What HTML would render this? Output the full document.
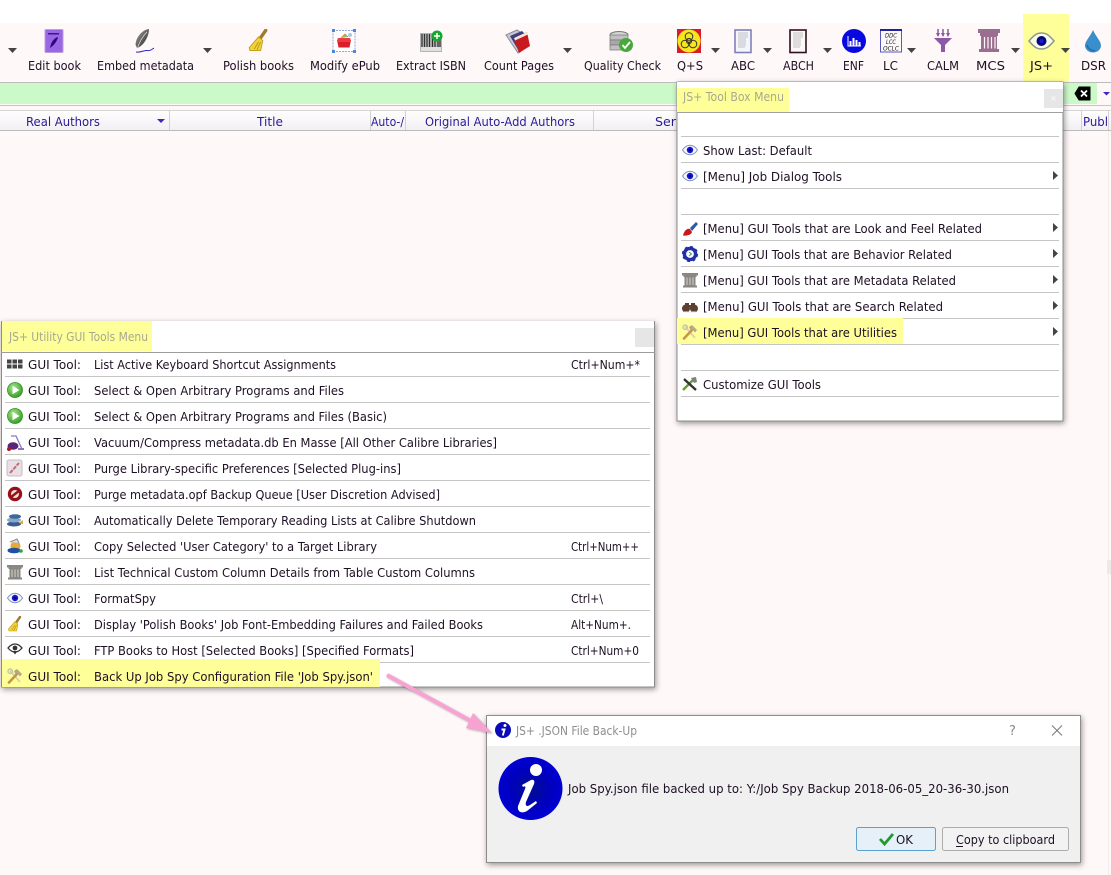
<!DOCTYPE html>
<html><head><meta charset="utf-8"><title>JS+ menus</title>
<style>
html,body{margin:0;padding:0;background:#fff;width:1111px;height:875px;overflow:hidden}
svg{display:block}
text{font-family:"DejaVu Sans","Liberation Sans",sans-serif;font-size:12px;fill:#1e1024}
.h text,text.h{fill:#2a1a96}
.g{fill:#a8a890}
.sh{filter:drop-shadow(1px 2px 3px rgba(0,0,0,.4))}
</style></head><body>
<svg width="1111" height="875" viewBox="0 0 1111 875" xmlns="http://www.w3.org/2000/svg">
<defs>
<linearGradient id="hd" x1="0" y1="0" x2="0" y2="1"><stop offset="0" stop-color="#fff"/><stop offset="1" stop-color="#f3eff3"/></linearGradient>
<linearGradient id="fe" x1="0" y1="0" x2="1" y2="1"><stop offset="0" stop-color="#a8a8a8"/><stop offset="1" stop-color="#202020"/></linearGradient>
<radialGradient id="bi" cx=".5" cy=".5" r=".55"><stop offset="0" stop-color="#000f90"/><stop offset=".6" stop-color="#0000c0"/><stop offset="1" stop-color="#0000d8"/></radialGradient>
<radialGradient id="gr" cx=".4" cy=".35" r=".7"><stop offset="0" stop-color="#a8e890"/><stop offset="1" stop-color="#2f9a1e"/></radialGradient>
<symbol id="eye" viewBox="0 0 16 16"><path d="M.5 8C3 4.200 5.500 3.200 8 3.200S13 4.200 15.500 8C13 11.800 10.500 12.800 8 12.800S3 11.800.5 8Z" fill="#f4f6fa" stroke="#7f92b8" stroke-width="1"/><circle cx="8" cy="8" r="3.200" fill="#1414d8"/><circle cx="8" cy="8" r="1.300" fill="#000080"/></symbol>
<symbol id="col" viewBox="0 0 16 16"><path d="M0 1H16V3.500H0ZM1.500 3.500H14.500V5H1.500ZM2.500 5H13.500V13.500H2.500ZM1 13.500H15V15.500H1Z" fill="#8a8682"/><path d="M5 5.500V13M8 5.500V13M11 5.500V13" stroke="#d0ccc8" stroke-width="1.100"/></symbol>
<symbol id="broom" viewBox="0 0 16 16"><path d="M13 1 9.500 6" stroke="#a07a30" stroke-width="2.400" stroke-linecap="round"/><path d="M8 5.500 11 8 9.500 15 2 15 1.500 13Z" fill="#f2d23a" stroke="#c09a18" stroke-width=".6"/><path d="M5 14 8 9M7 14.500 9.500 9" stroke="#c09a18" stroke-width=".7"/></symbol>
<symbol id="hammer" viewBox="0 0 16 16"><path d="M3 2.500 13 14" stroke="#d4d4bc" stroke-width="2"/><circle cx="3.200" cy="3.200" r="2.200" fill="none" stroke="#c4c4ac" stroke-width="1.400"/><path d="M2 14.500 10 6" stroke="#c89648" stroke-width="2.600" stroke-linecap="round"/><path d="M7 3 10 1 15 6 13 8.500 10.500 5.500 8 5.500Z" fill="#b4a888"/></symbol>
<symbol id="play" viewBox="0 0 16 16"><circle cx="8" cy="8" r="7.600" fill="url(#gr)" stroke="#2a8a1c" stroke-width=".6"/><path d="M5.500 3.800 12.500 8 5.500 12.200Z" fill="#fff"/></symbol>
</defs>

<!-- main background -->
<rect x="0" y="0" width="1111" height="875" fill="#fff8f8"/>
<rect x="0" y="0" width="1111" height="23" fill="#fff"/>
<rect x="0" y="82" width="1111" height="1" fill="#bcbcbc"/>
<rect x="0" y="83" width="1097" height="21" fill="#ccf9c8"/>
<rect x="1097" y="83" width="14" height="21" fill="#fff8f8"/>
<rect x="0" y="105" width="1111" height="1" fill="#c4c4c4"/>
<rect x="0" y="110" width="1111" height="20" fill="url(#hd)"/>
<rect x="0" y="110" width="1111" height="1" fill="#d4d4d4"/>
<rect x="0" y="130" width="1111" height="1" fill="#bcbcbc"/>
<path d="M169.500 111V130M370.500 111V130M405.500 111V130M593.500 111V130M1081.500 111V130M1108.500 111V130" stroke="#d2d2d6"/>
<g class="h">
<text x="26" y="126" textLength="74" lengthAdjust="spacingAndGlyphs">Real Authors</text>
<text x="257" y="126" textLength="26" lengthAdjust="spacingAndGlyphs">Title</text>
<text x="371" y="126" textLength="33" lengthAdjust="spacingAndGlyphs">Auto-/</text>
<text x="425" y="126" textLength="150" lengthAdjust="spacingAndGlyphs">Original Auto-Add Authors</text>
<text x="655" y="126" textLength="21" lengthAdjust="spacingAndGlyphs">Ser</text>
<text x="1083" y="126" textLength="25" lengthAdjust="spacingAndGlyphs">Publ</text>
</g>
<path d="M157 119H165L161 123Z" fill="#3a2ab8"/>
<path d="M1103 92H1110L1106.500 95.500Z" fill="#3a2ab8"/>
<path d="M1079 87H1090V100H1079L1075 93.500Z" fill="#000" stroke="#000" stroke-linejoin="round"/>
<path d="M1081 90.500 1087 96.500M1087 90.500 1081 96.500" stroke="#fff" stroke-width="1.800"/>
<path d="M1108.500 131V875" stroke="#f3ecec"/>
<rect x="1107" y="560" width="4" height="14" fill="#efe8e8"/>

<!-- JS+ highlight -->
<rect x="1023" y="14" width="46" height="68" fill="#ffff99"/>

<!-- toolbar labels -->
<g>
<text x="28" y="70" textLength="53" lengthAdjust="spacingAndGlyphs">Edit book</text>
<text x="97" y="70" textLength="97" lengthAdjust="spacingAndGlyphs">Embed metadata</text>
<text x="223" y="70" textLength="71" lengthAdjust="spacingAndGlyphs">Polish books</text>
<text x="310" y="70" textLength="70" lengthAdjust="spacingAndGlyphs">Modify ePub</text>
<text x="396" y="70" textLength="70" lengthAdjust="spacingAndGlyphs">Extract ISBN</text>
<text x="484" y="70" textLength="70" lengthAdjust="spacingAndGlyphs">Count Pages</text>
<text x="584" y="70" textLength="77" lengthAdjust="spacingAndGlyphs">Quality Check</text>
<text x="677" y="70" textLength="26" lengthAdjust="spacingAndGlyphs">Q+S</text>
<text x="731" y="70" textLength="24" lengthAdjust="spacingAndGlyphs">ABC</text>
<text x="783" y="70" textLength="31" lengthAdjust="spacingAndGlyphs">ABCH</text>
<text x="843" y="70" textLength="21" lengthAdjust="spacingAndGlyphs">ENF</text>
<text x="883" y="70" textLength="15" lengthAdjust="spacingAndGlyphs">LC</text>
<text x="927" y="70" textLength="32" lengthAdjust="spacingAndGlyphs">CALM</text>
<text x="976" y="70" textLength="29" lengthAdjust="spacingAndGlyphs">MCS</text>
<text x="1030" y="70" textLength="23" lengthAdjust="spacingAndGlyphs">JS+</text>
<text x="1081" y="70" textLength="25" lengthAdjust="spacingAndGlyphs">DSR</text>
</g>

<!-- dropdown arrows -->
<g fill="#444">
<path d="M8 48H17L12.500 53Z"/><path d="M203 48H212L207.500 53Z"/><path d="M563 48H572L567.500 53Z"/>
<path d="M711 48H720L715.500 53Z"/><path d="M763 48H772L767.500 53Z"/><path d="M823 48H832L827.500 53Z"/>
<path d="M907 48H916L911.500 53Z"/><path d="M1011 48H1020L1015.500 53Z"/><path d="M1061 48H1070L1065.500 53Z"/>
</g>

<!-- Edit book -->
<rect x="45" y="29.500" width="18" height="23" rx="1" fill="#9a66e6" stroke="#b8a0d8"/>
<rect x="48" y="33" width="11" height="1.500" fill="#3a1a80"/>
<path d="M58 37C54 38 51 42 50 48C53 46 57 42 58 37Z" fill="#2a0a78"/>
<!-- Embed -->
<path d="M149 29C142 30 136 37 135.500 44.500L137 48C139 47.500 141 46 143 44C147 39 149 34 149 29Z" fill="url(#fe)"/><path d="M147 32C143 36 139 42 137 50" stroke="#eee" stroke-width=".6" fill="none"/>
<path d="M136 52C140 53 144 50 147 50.500S151 50 154 48" stroke="#2a2ab8" stroke-width="1" fill="none"/>
<!-- Polish -->
<use href="#broom" x="247" y="29" width="23" height="23"/>
<!-- Modify -->
<rect x="333" y="30.500" width="22" height="21" fill="#fff" stroke="#8ea8de" stroke-dasharray="2 1"/>
<g fill="#4a88e0"><rect x="332" y="29" width="3" height="3"/><rect x="353" y="29" width="3" height="3"/><rect x="332" y="50" width="3" height="3"/><rect x="353" y="50" width="3" height="3"/></g>
<path d="M337 40H351L349.500 47.500H338.500Z" fill="#d8202c"/><rect x="337.500" y="38" width="13" height="4" rx="1" fill="#f03a40"/><path d="M341 38 345 34 348 37" fill="#8ac070" stroke="#c09040" stroke-width=".8"/><circle cx="350" cy="35" r="2" fill="#a8c8e8"/>
<!-- Extract -->
<rect x="420" y="33" width="22" height="19" fill="#b4b4b4"/>
<path d="M422 34V47M424.500 34V47M427 34V47M429.500 34V47M432.500 34V47M435 34V47M438 34V47M440 34V47" stroke="#303030" stroke-width="1.200"/>
<rect x="421" y="47" width="20" height="4" fill="#e0e0e0"/>
<circle cx="437" cy="36" r="5.500" fill="#16a82e"/><path d="M437 33V39M434 36H440" stroke="#fff" stroke-width="1.500"/>
<!-- Count -->
<path d="M506 35 517 30 523 34 518 53Z" fill="#c8c8d4" stroke="#8c8c98"/><path d="M510 36 522 31 526 35 520 53Z" fill="#3e3e80"/><path d="M514 38 527 32 530 46 519 53Z" fill="#c81820"/><path d="M514 38 527 32 528 34.500 515 40.500Z" fill="#f0e8d8"/>
<!-- Quality -->
<ellipse cx="619" cy="35" rx="9" ry="3.500" fill="#d4d4d4" stroke="#777"/><rect x="610" y="35" width="18" height="5" fill="#c0c0c0" stroke="#777" stroke-width=".7"/><rect x="610" y="40" width="18" height="5" fill="#a8a8a8" stroke="#777" stroke-width=".7"/><rect x="610" y="45" width="18" height="5" fill="#c0c0c0" stroke="#777" stroke-width=".7"/>
<circle cx="626" cy="45" r="7" fill="#48a83a"/><path d="M622.500 45 625 48 630 42" stroke="#fff" stroke-width="1.800" fill="none"/>
<!-- Q+S -->
<rect x="677" y="29" width="24" height="24" fill="#d81c2a"/><circle cx="689" cy="41" r="11.500" fill="#f5e61e"/>
<circle cx="689" cy="41" r="2.600" fill="none" stroke="#333" stroke-width="1"/><circle cx="689" cy="36.500" r="3.800" fill="none" stroke="#333" stroke-width="1"/><circle cx="685" cy="44" r="3.800" fill="none" stroke="#333" stroke-width="1"/><circle cx="693" cy="44" r="3.800" fill="none" stroke="#333" stroke-width="1"/>
<!-- ABC -->
<rect x="735" y="30" width="16" height="22.500" fill="#f4f6fc" stroke="#8080b8" stroke-width="1.600"/>
<path d="M738 33H748M738 35H748M738 37H748M738 39H746M738 41H746M738 43H746M738 45H746M738 47H745" stroke="#c0c0c8" stroke-width=".9"/>
<!-- ABCH -->
<rect x="790" y="30" width="16" height="22.500" fill="#fbf8f8" stroke="#301020" stroke-width="1.600"/>
<path d="M793 33H803M793 35H803M793 37H803M793 39H801M793 41H801M793 43H801M793 45H801M793 47H800" stroke="#c0c0c0" stroke-width=".9"/>
<!-- ENF -->
<circle cx="854" cy="41" r="12" fill="#0808e0"/><path d="M848 36V46H861" stroke="#fff" fill="none" stroke-width="1"/><path d="M850.500 41V45.500M853.500 38V45.500M856.500 40V45.500M859.500 42V45.500" stroke="#fff" stroke-width="2"/>
<!-- LC -->
<rect x="880.500" y="30" width="21" height="22" fill="#fafaf8" stroke="#5858c0"/><rect x="880" y="29" width="22" height="2" fill="#2020a0"/>
<text x="885" y="37.500" style="font-size:6px;font-style:italic" textLength="12" lengthAdjust="spacingAndGlyphs">DDC</text>
<text x="886" y="44" style="font-size:6px;font-style:italic" textLength="10" lengthAdjust="spacingAndGlyphs">LCC</text>
<text x="883" y="50.500" style="font-size:6px;font-style:italic" textLength="16" lengthAdjust="spacingAndGlyphs">OCLC</text>
<!-- CALM -->
<path d="M934 38H952L945 45V52H941V45Z" fill="#8c58a8"/><path d="M938 29V36M943 29V36M948 29V36" stroke="#8c58a8" stroke-width="1.500"/><path d="M936 33 938 37 940 33M941 33 943 37 945 33M946 33 948 37 950 33" fill="#8c58a8"/>
<!-- MCS -->
<path d="M978 29H1000V33H978ZM980 33H998V36H980ZM981 36H997V49H981ZM979 49H999V52H979Z" fill="#9a6e90"/>
<path d="M984.500 37V48.500M988 37V48.500M991.500 37V48.500M995 37V48.500" stroke="#fff8f8" stroke-width="1.200"/>
<!-- JS+ eye -->
<path d="M1029 41C1034 35 1037 33 1041.500 33S1049 35 1054 41C1049 47 1046 49 1041.500 49S1034 47 1029 41Z" fill="#fbfbe8" stroke="#8a9a8a" stroke-width="1.500"/><circle cx="1041.500" cy="41" r="5" fill="#08087e"/><circle cx="1041.500" cy="41" r="2" fill="#1a1ad0"/>
<!-- DSR -->
<path d="M1093 30C1090 37 1085 41 1085 45.500A8 7 0 0 0 1101 45.500C1101 41 1096 37 1093 30Z" fill="#3a8ecc"/><path d="M1087 45C1088 49 1092 51 1095 50.500" stroke="#1e6ea8" stroke-width="1.500" fill="none"/>

<!-- ============ JS+ Tool Box Menu ============ -->
<g class="sh"><rect x="677" y="82" width="386" height="339" fill="#fff" stroke="#8c8c8c" stroke-width="1"/></g>
<rect x="677" y="82" width="386" height="30" fill="#fff"/>
<rect x="677" y="88" width="112" height="25" fill="#ffff99"/>
<text class="g" x="683" y="101" textLength="101" lengthAdjust="spacingAndGlyphs">JS+ Tool Box Menu</text>
<rect x="1044" y="89" width="19" height="19" fill="#e6e6e6"/>
<path d="M1051.500 96.500 1055.500 100.500M1055.500 96.500 1051.500 100.500" stroke="#f8f8f8"/>
<rect x="677" y="112" width="386" height="1" fill="#a0a0a0"/>
<path d="M681 136.500H1059M681 162.500H1059M681 188.500H1059M681 214.500H1059M681 240.500H1059M681 266.500H1059M681 292.500H1059M681 318.500H1059M681 344.500H1059M681 370.500H1059M681 396.500H1059" stroke="#c4c4c4"/>
<rect x="677" y="318" width="226" height="26" fill="#ffff99"/>
<use href="#eye" x="682" y="142" width="16" height="16"/>
<use href="#eye" x="682" y="168" width="16" height="16"/>
<path d="M683 235.500C684 231 687 228 690 229L692 232C691 235 687 236 683 235.500Z" fill="#c81818"/><path d="M690 228 696 222 698 224 692 231Z" fill="#2a5aa8"/>
<g transform="translate(690,254)"><circle r="5.600" fill="none" stroke="#2030a8" stroke-width="3.400"/><circle r="7.200" fill="none" stroke="#2030a8" stroke-width="1.800" stroke-dasharray="2.800 2.850"/><path d="M-1-2 1.500 0-1 2" stroke="#38a060" fill="none"/></g>
<use href="#col" x="682" y="272" width="16" height="16"/>
<g fill="#5c4030"><circle cx="686" cy="308.500" r="4"/><circle cx="694" cy="308.500" r="4"/><rect x="685" y="303" width="4" height="4"/><rect x="691" y="303" width="4" height="4"/><rect x="688" y="305" width="4" height="2.500"/></g>
<path d="M684 312H696" stroke="#e8e8e8"/>
<use href="#hammer" x="682" y="324" width="16" height="16"/>
<path d="M683 390 695 378" stroke="#5aa02c" stroke-width="2.400"/><path d="M684 379 696 390" stroke="#333" stroke-width="2.400"/><path d="M691 378 696 377 697 382 694 383" fill="#808080"/>
<g>
<text x="703" y="155" textLength="109" lengthAdjust="spacingAndGlyphs">Show Last: Default</text>
<text x="703" y="181" textLength="139" lengthAdjust="spacingAndGlyphs">[Menu] Job Dialog Tools</text>
<text x="703" y="233" textLength="279" lengthAdjust="spacingAndGlyphs">[Menu] GUI Tools that are Look and Feel Related</text>
<text x="703" y="259" textLength="249" lengthAdjust="spacingAndGlyphs">[Menu] GUI Tools that are Behavior Related</text>
<text x="703" y="285" textLength="253" lengthAdjust="spacingAndGlyphs">[Menu] GUI Tools that are Metadata Related</text>
<text x="703" y="311" textLength="240" lengthAdjust="spacingAndGlyphs">[Menu] GUI Tools that are Search Related</text>
<text x="703" y="337" textLength="194" lengthAdjust="spacingAndGlyphs">[Menu] GUI Tools that are Utilities</text>
<text x="703" y="389" textLength="118" lengthAdjust="spacingAndGlyphs">Customize GUI Tools</text>
</g>
<g fill="#444"><path d="M1053 171 1058 175.500 1053 180Z"/><path d="M1053 223 1058 227.500 1053 232Z"/><path d="M1053 249 1058 253.500 1053 258Z"/><path d="M1053 275 1058 279.500 1053 284Z"/><path d="M1053 301 1058 305.500 1053 310Z"/><path d="M1053 327 1058 331.500 1053 336Z"/></g>

<!-- ============ Utility menu ============ -->
<g class="sh"><rect x="1.500" y="321.500" width="653" height="365.500" fill="#fff" stroke="#8c8c8c" stroke-width="1"/></g>
<rect x="2" y="321" width="652" height="31" fill="#fff"/>
<rect x="2" y="321" width="150" height="30" fill="#ffff99"/>
<text class="g" x="9" y="341" textLength="139" lengthAdjust="spacingAndGlyphs">JS+ Utility GUI Tools Menu</text>
<rect x="635" y="328" width="19" height="19" fill="#e6e6e6"/>
<rect x="1" y="352" width="654" height="1" fill="#9c9c9c"/>
<path d="M5 376.500H650M5 402.500H650M5 428.500H650M5 454.500H650M5 480.500H650M5 506.500H650M5 532.500H650M5 558.500H650M5 584.500H650M5 610.500H650M5 636.500H650M5 662.500H650" stroke="#c4c4c4"/>
<rect x="2" y="659" width="378" height="28" fill="#ffff99"/>
<!-- menu icons -->
<g fill="#444"><rect x="7" y="359.500" width="4.500" height="4"/><rect x="12.500" y="359.500" width="4.500" height="4"/><rect x="18" y="359.500" width="4.500" height="4"/><rect x="7" y="364.500" width="4.500" height="4"/><rect x="12.500" y="364.500" width="4.500" height="4"/><rect x="18" y="364.500" width="4.500" height="4"/></g>
<use href="#play" x="7" y="382" width="16" height="16"/>
<use href="#play" x="7" y="408" width="16" height="16"/>
<path d="M11 436H16L21.500 448" stroke="#8878c8" stroke-width="1.300" fill="none"/><path d="M18 449H24" stroke="#8878c8" stroke-width="2"/><ellipse cx="13" cy="446" rx="5.500" ry="3.800" fill="#5a2478"/><circle cx="9" cy="449" r="2" fill="#a81828"/>
<rect x="7" y="460" width="15" height="16" rx="2" fill="#e8e0e4" stroke="#c4bcc4"/><path d="M10 473 19 463" stroke="#c46a78" stroke-width="2" stroke-dasharray="4 1"/>
<circle cx="15" cy="494" r="7.200" fill="#981018"/><circle cx="15" cy="494" r="4" fill="#e8e0e0"/><path d="M10.500 497.500 19.500 490.500" stroke="#981018" stroke-width="2.400"/>
<ellipse cx="14" cy="524" rx="7" ry="2.500" fill="#3a5a90"/><ellipse cx="14" cy="520" rx="7" ry="2.500" fill="#8aa6c8"/><ellipse cx="15" cy="516.500" rx="6" ry="2.300" fill="#3a6a9a"/><path d="M19 523 23 520 23 524Z" fill="#e0a040"/>
<circle cx="15.500" cy="546" r="5" fill="#e8a838"/><ellipse cx="14" cy="550.500" rx="6.500" ry="2.800" fill="#2050a0"/><circle cx="21" cy="551" r="1.800" fill="#30a040"/><path d="M10 542 17 539 19 543" stroke="#889" fill="#dde"/>
<use href="#col" x="7" y="564" width="16" height="16"/>
<use href="#eye" x="7" y="590" width="16" height="16"/>
<use href="#broom" x="7" y="616" width="16" height="16"/>
<path d="M8 648C10.500 645 12.500 644 15 644S19.500 645 22 648C19.500 651 17.500 652 15 652S10.500 651 8 648Z" fill="#fff" stroke="#333" stroke-width="1.300"/><circle cx="15" cy="648" r="2.400" fill="#333"/><path d="M12.500 651H17.500L15 654.500Z" fill="#333"/>
<use href="#hammer" x="7" y="668" width="16" height="16"/>

<g>
<text x="28" y="369" textLength="53" lengthAdjust="spacingAndGlyphs">GUI Tool:</text>
<text x="28" y="395" textLength="53" lengthAdjust="spacingAndGlyphs">GUI Tool:</text>
<text x="28" y="421" textLength="53" lengthAdjust="spacingAndGlyphs">GUI Tool:</text>
<text x="28" y="447" textLength="53" lengthAdjust="spacingAndGlyphs">GUI Tool:</text>
<text x="28" y="473" textLength="53" lengthAdjust="spacingAndGlyphs">GUI Tool:</text>
<text x="28" y="499" textLength="53" lengthAdjust="spacingAndGlyphs">GUI Tool:</text>
<text x="28" y="525" textLength="53" lengthAdjust="spacingAndGlyphs">GUI Tool:</text>
<text x="28" y="551" textLength="53" lengthAdjust="spacingAndGlyphs">GUI Tool:</text>
<text x="28" y="577" textLength="53" lengthAdjust="spacingAndGlyphs">GUI Tool:</text>
<text x="28" y="603" textLength="53" lengthAdjust="spacingAndGlyphs">GUI Tool:</text>
<text x="28" y="629" textLength="53" lengthAdjust="spacingAndGlyphs">GUI Tool:</text>
<text x="28" y="655" textLength="53" lengthAdjust="spacingAndGlyphs">GUI Tool:</text>
<text x="28" y="681" textLength="53" lengthAdjust="spacingAndGlyphs">GUI Tool:</text>

<text x="94" y="369" textLength="242" lengthAdjust="spacingAndGlyphs">List Active Keyboard Shortcut Assignments</text>
<text x="94" y="395" textLength="250" lengthAdjust="spacingAndGlyphs">Select &amp; Open Arbitrary Programs and Files</text>
<text x="94" y="421" textLength="293" lengthAdjust="spacingAndGlyphs">Select &amp; Open Arbitrary Programs and Files (Basic)</text>
<text x="94" y="447" textLength="403" lengthAdjust="spacingAndGlyphs">Vacuum/Compress metadata.db En Masse [All Other Calibre Libraries]</text>
<text x="94" y="473" textLength="307" lengthAdjust="spacingAndGlyphs">Purge Library-specific Preferences [Selected Plug-ins]</text>
<text x="94" y="499" textLength="346" lengthAdjust="spacingAndGlyphs">Purge metadata.opf Backup Queue [User Discretion Advised]</text>
<text x="94" y="525" textLength="382" lengthAdjust="spacingAndGlyphs">Automatically Delete Temporary Reading Lists at Calibre Shutdown</text>
<text x="94" y="551" textLength="283" lengthAdjust="spacingAndGlyphs">Copy Selected 'User Category' to a Target Library</text>
<text x="94" y="577" textLength="381" lengthAdjust="spacingAndGlyphs">List Technical Custom Column Details from Table Custom Columns</text>
<text x="94" y="603" textLength="62" lengthAdjust="spacingAndGlyphs">FormatSpy</text>
<text x="94" y="629" textLength="389" lengthAdjust="spacingAndGlyphs">Display 'Polish Books' Job Font-Embedding Failures and Failed Books</text>
<text x="94" y="655" textLength="320" lengthAdjust="spacingAndGlyphs">FTP Books to Host [Selected Books] [Specified Formats]</text>
<text x="94" y="681" textLength="279" lengthAdjust="spacingAndGlyphs">Back Up Job Spy Configuration File 'Job Spy.json'</text>

<text x="571" y="369" textLength="69" lengthAdjust="spacingAndGlyphs">Ctrl+Num+*</text>
<text x="571" y="551" textLength="68" lengthAdjust="spacingAndGlyphs">Ctrl+Num++</text>
<text x="571" y="603" textLength="32" lengthAdjust="spacingAndGlyphs">Ctrl+\</text>
<text x="571" y="629" textLength="60" lengthAdjust="spacingAndGlyphs">Alt+Num+.</text>
<text x="571" y="655" textLength="68" lengthAdjust="spacingAndGlyphs">Ctrl+Num+0</text>
</g>

<!-- ============ Dialog ============ -->
<g class="sh"><rect x="486.500" y="715.500" width="594" height="147" fill="#f0f0f0" stroke="#8c8c8c" stroke-width="1"/></g>
<rect x="487" y="716" width="593" height="30" fill="#fff"/>
<ellipse cx="503" cy="730" rx="8" ry="8" fill="#0a0ab8"/>
<circle cx="505" cy="725.500" r="1.500" fill="#fff"/><path d="M501.500 729.500H504.500L502.800 735.500" stroke="#fff" stroke-width="1.900" fill="none"/>
<text x="516" y="735" style="fill:#8e8e8e" textLength="121" lengthAdjust="spacingAndGlyphs">JS+ .JSON File Back-Up</text>
<text x="1009" y="735" style="fill:#888;font-size:13px">?</text>
<path d="M1052 725.500 1062 735.500M1062 725.500 1052 735.500" stroke="#777" stroke-width="1"/>
<ellipse cx="530.500" cy="788.500" rx="32" ry="31.500" fill="url(#bi)"/>
<circle cx="536" cy="770" r="6" fill="#fff"/>
<path d="M522 785 531 780C534 779 535 781 534 784L526 802C525 806 527 807 530 805L536 801L537 803 527 811C522 814 517 812 518 806L525 789C526 786 525 786 523 787Z" fill="#fff"/>
<text x="568" y="793" textLength="441" lengthAdjust="spacingAndGlyphs">Job Spy.json file backed up to: Y:/Job Spy Backup 2018-06-05_20-36-30.json</text>

<rect x="856.500" y="827.500" width="79" height="23" rx="2" fill="#e6f0f8" stroke="#5aa0d0"/>
<path d="M880 839 884.500 844 893 834" stroke="#1e9a30" stroke-width="2.800" fill="none"/>
<text x="896" y="844" textLength="17" lengthAdjust="spacingAndGlyphs">OK</text>
<rect x="942.500" y="827.500" width="126" height="23" rx="2" fill="#f2f2f2" stroke="#adadad"/>
<text x="956" y="844" textLength="99" lengthAdjust="spacingAndGlyphs">Copy to clipboard</text>
<rect x="956" y="846" width="7" height="1" fill="#1e1024"/>

<!-- pink arrow -->
<g style="filter:drop-shadow(1px 1px 1px rgba(0,0,0,.3))">
<path d="M387 675 480 726" stroke="#f8a2d2" stroke-width="4" fill="none"/>
<path d="M492 733 466 728 473 713Z" fill="#f8a2d2"/>
</g>
</svg>
</body></html>
